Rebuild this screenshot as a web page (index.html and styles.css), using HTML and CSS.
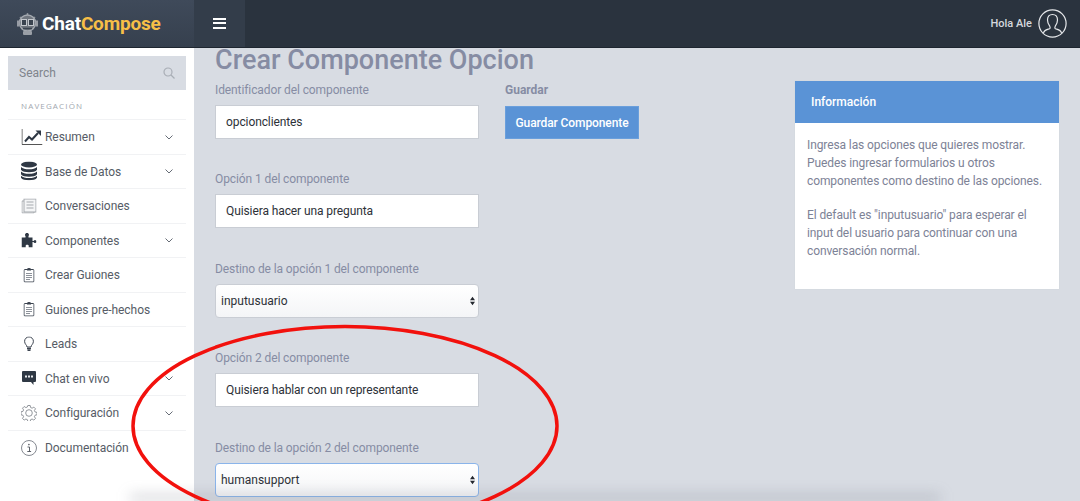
FILE: index.html
```html
<!DOCTYPE html>
<html lang="es">
<head>
  <meta charset="UTF-8" />
  <meta name="viewport" content="width=device-width, initial-scale=1.0" />
  <title>ChatCompose</title>
  <link rel="stylesheet" href="styles.css">
</head>
<body>
<section class="header">
  <div class="brand">
    <svg class="brand-icon" width="21" height="22" viewBox="0 0 21 22">
      <path d="M3 4l2.500 2.500M18 4l-2.500 2.500M10.500 0v3" stroke="#8e949c" stroke-width="1.500" fill="none"/>
      <circle cx="10.500" cy="10" r="8" fill="#6f757e" stroke="#a4a9b0" stroke-width="1.500"/>
      <rect x="0" y="7.500" width="2.500" height="6" fill="#979ca4"/>
      <rect x="18.500" y="7.500" width="2.500" height="6" fill="#979ca4"/>
      <rect x="4.500" y="6.500" width="5" height="6" fill="#3a434f" stroke="#c3c7cc"/>
      <rect x="11.500" y="6.500" width="5" height="6" fill="#3a434f" stroke="#c3c7cc"/>
      <path d="M6 15.500h9" stroke="#3a434f" stroke-width="1.500"/>
      <rect x="6" y="18" width="9" height="4" rx="1" fill="#9a9fa6"/>
    </svg>
    <span class="brand-name">Chat<span class="brand-accent">Compose</span></span>
  </div>
  <div class="topbar">
    <div class="burger"><span></span><span></span><span></span></div>
    <div class="user">
      <span>Hola Ale</span>
      <svg width="29" height="29" viewBox="0 0 29 29" fill="none" stroke="#e6e8eb" stroke-width="1.2">
        <circle cx="14.500" cy="14.500" r="13.600"/>
        <path d="M5.500 24c.5-3 4-3.500 6-4.300.8-.4.8-1.500.2-2.500-1.500-2-2.200-4-2.200-6.200 0-3.500 2-5.500 5-5.500s5 2 5 5.500c0 2.200-.7 4.200-2.200 6.200-.6 1-.6 2.100.2 2.500 2 .8 5.500 1.300 6 4.300"/>
      </svg>
    </div>
  </div>
</section>

<section class="layout">
  <aside class="sidebar">
    <div class="search">
      <span>Search</span>
      <svg width="12" height="12" viewBox="0 0 12 12" fill="none" stroke="#a9aeb6" stroke-width="1.2">
        <circle cx="5" cy="5" r="4"/><path d="M8 8l3.500 3.500"/>
      </svg>
    </div>
    <p class="nav-title">NAVEGACIÓN</p>
    <ul class="nav">
      <li>
        <svg class="nav-icon nav-icon-wide" width="21" height="16" viewBox="0 0 21 16" fill="none" stroke="#2f3844">
          <path d="M.5 0v15.500h20.500" stroke="#555" />
          <path d="M3.500 12.500l4-4.500 3 2.500 6-6.500" stroke-width="2"/>
          <path d="M14 1.500h5.500V7z" fill="#2f3844" stroke="none"/>
        </svg>
        <span>Resumen</span>
        <svg class="chev" width="8" height="5" viewBox="0 0 8 5"><path d="M.5.500L4 4 7.500.500" fill="none" stroke="#666c76"/></svg>
      </li>
      <li>
        <svg class="nav-icon" width="16" height="19" viewBox="0 0 16 19" fill="#2f3844">
          <ellipse cx="8" cy="3" rx="8" ry="3"/>
          <path d="M0 5.500c1.500 1.700 4.500 2.300 8 2.300s6.500-.6 8-2.300v2.700c-1 1.800-4.500 2.500-8 2.500s-7-.7-8-2.500z"/>
          <path d="M0 10c1.500 1.700 4.500 2.300 8 2.300s6.500-.6 8-2.300v2.700c-1 1.800-4.500 2.500-8 2.500s-7-.7-8-2.500z"/>
          <path d="M0 14.300c1.500 1.700 4.500 2.300 8 2.300s6.500-.6 8-2.300v1.900c-1 1.800-4.500 2.500-8 2.500s-7-.7-8-2.500z"/>
        </svg>
        <span>Base de Datos</span>
        <svg class="chev" width="8" height="5" viewBox="0 0 8 5"><path d="M.5.500L4 4 7.500.500" fill="none" stroke="#666c76"/></svg>
      </li>
      <li>
        <svg class="nav-icon" width="15" height="15" viewBox="0 0 15 15" fill="none" stroke="#a5a9ae">
          <path d="M2.500 2.500H.5v12h12v-1.500"/>
          <rect x="2.500" y=".5" width="12" height="13" fill="#f4f5f6"/>
          <path d="M5 3.500h7M5 6.500h7M5 9.500h7"/>
        </svg>
        <span>Conversaciones</span>
      </li>
      <li>
        <svg class="nav-icon" width="15" height="15" viewBox="0 0 15 15" fill="#2f3844">
          <path d="M0 5h4V3.600C3.200 3 3.300 .5 5.500 .5S7.800 3 7 3.600V5h4v3.500h1.500v1H11V15H7.200v-1.500c.4-1.600-3.400-1.600-3 0V15H0z"/>
          <circle cx="13.500" cy="9" r="1.500"/>
        </svg>
        <span>Componentes</span>
        <svg class="chev" width="8" height="5" viewBox="0 0 8 5"><path d="M.5.500L4 4 7.500.500" fill="none" stroke="#666c76"/></svg>
      </li>
      <li>
        <svg class="nav-icon" width="11" height="15" viewBox="0 0 11 15" fill="none" stroke="#3c4450">
          <rect x=".5" y="2" width="10" height="12.500" rx="1"/>
          <path d="M3.500 2.500V1.500h1.200L5.500.5l.8 1h1.200v1z" fill="#3c4450"/>
          <path d="M2.500 6h6M2.500 8h6M2.500 10h6M2.500 12h4" stroke="#8d929a"/>
        </svg>
        <span>Crear Guiones</span>
      </li>
      <li>
        <svg class="nav-icon" width="11" height="15" viewBox="0 0 11 15" fill="none" stroke="#3c4450">
          <rect x=".5" y="2" width="10" height="12.500" rx="1"/>
          <path d="M3.500 2.500V1.500h1.200L5.500.5l.8 1h1.200v1z" fill="#3c4450"/>
          <path d="M2.500 6h6M2.500 8h6M2.500 10h6M2.500 12h4" stroke="#8d929a"/>
        </svg>
        <span>Guiones pre-hechos</span>
      </li>
      <li>
        <svg class="nav-icon" width="10" height="15" viewBox="0 0 10 15" fill="none" stroke="#3c4450">
          <path d="M3 10.500C3 8.500.6 7.800.6 4.800a4.400 4.400 0 0 1 8.800 0c0 3-2.400 3.700-2.400 5.700z"/>
          <path d="M3 12h4M3.500 13.800h3" stroke-width="1.500"/>
        </svg>
        <span>Leads</span>
      </li>
      <li>
        <svg class="nav-icon" width="14" height="14" viewBox="0 0 14 14" fill="#2f3844">
          <path d="M1 0h12a1 1 0 0 1 1 1v9a1 1 0 0 1-1 1h-1.500v3L9 11H1a1 1 0 0 1-1-1V1a1 1 0 0 1 1-1z"/>
          <path d="M3 4.500h2v2H3zM6 4.500h2v2H6zM9 4.500h2v2H9z" fill="#e8eaed"/>
        </svg>
        <span>Chat en vivo</span>
        <svg class="chev" width="8" height="5" viewBox="0 0 8 5"><path d="M.5.500L4 4 7.500.500" fill="none" stroke="#666c76"/></svg>
      </li>
      <li>
        <svg class="nav-icon" width="16" height="16" viewBox="0 0 16 16" fill="none" stroke="#777c84" stroke-width=".8">
          <circle cx="8" cy="8" r="3.300"/>
          <path d="M6.800.5h2.400l.4 2 1.500.7 1.700-1.100 1.700 1.700-1.100 1.700.7 1.500 1.900.4v2.400l-1.900.4-.7 1.500 1.100 1.700-1.700 1.700-1.700-1.100-1.500.7-.4 1.900H6.800l-.4-1.900-1.500-.7-1.700 1.100-1.700-1.700 1.100-1.700-.7-1.500-1.900-.4V6.800l1.900-.4.7-1.500-1.100-1.700 1.700-1.700 1.700 1.100 1.500-.7z"/>
        </svg>
        <span>Configuración</span>
        <svg class="chev" width="8" height="5" viewBox="0 0 8 5"><path d="M.5.500L4 4 7.500.500" fill="none" stroke="#666c76"/></svg>
      </li>
      <li>
        <svg class="nav-icon" width="16" height="16" viewBox="0 0 16 16" fill="none" stroke="#777c84" stroke-width=".9">
          <circle cx="8" cy="8" r="7.500"/>
          <path d="M6.500 7h2v4.500M6.300 11.500h3.800" stroke="#4c5159"/>
          <circle cx="7.900" cy="4.600" r=".8" fill="#4c5159" stroke="none"/>
        </svg>
        <span>Documentación</span>
      </li>
    </ul>
  </aside>

  <main class="content">
    <h1>Crear Componente Opcion</h1>
    <div class="columns">
      <form class="fields">
        <div class="field">
          <label>Identificador del componente</label>
          <input type="text" value="opcionclientes" />
        </div>
        <div class="field">
          <label>Opción 1 del componente</label>
          <input type="text" value="Quisiera hacer una pregunta" />
        </div>
        <div class="field">
          <label>Destino de la opción 1 del componente</label>
          <div class="select-wrap">
            <select><option>inputusuario</option></select>
            <svg class="select-arrows" width="5" height="10" viewBox="0 0 6 10" fill="#23272e"><path d="M3 0l3 4H0zM3 10L0 6h6z"/></svg>
          </div>
        </div>
        <div class="field">
          <label>Opción 2 del componente</label>
          <input type="text" value="Quisiera hablar con un representante" />
        </div>
        <div class="field">
          <label>Destino de la opción 2 del componente</label>
          <div class="select-wrap">
            <select class="focused"><option>humansupport</option></select>
            <svg class="select-arrows" width="5" height="10" viewBox="0 0 6 10" fill="#23272e"><path d="M3 0l3 4H0zM3 10L0 6h6z"/></svg>
          </div>
        </div>
      </form>
      <div class="save">
        <p class="save-label">Guardar</p>
        <button type="button" class="btn">Guardar Componente</button>
      </div>
      <div class="info">
        <h2>Información</h2>
        <div class="info-body">
          <p>Ingresa las opciones que quieres mostrar. Puedes ingresar formularios u otros componentes como destino de las opciones.</p>
          <p>El default es "inputusuario" para esperar el input del usuario para continuar con una conversación normal.</p>
        </div>
      </div>
    </div>
  </main>
</section>

<div class="bottom-shade"></div>
<svg class="circle-mark" width="1080" height="501" viewBox="0 0 1080 501">
  <ellipse cx="345" cy="426" rx="212" ry="99.500" fill="none" stroke="#f2110d" stroke-width="3.500"/>
</svg>
</body>
</html>
```

FILE: styles.css
```css
* {
  box-sizing: border-box;
}
html, body {
  height: 501px;
  overflow: hidden;
}
body {
  margin: 0;
  background-color: #d8dce3;
  font-family: Roboto, sans-serif;
  position: relative;
}
.header {
  display: flex;
  height: 48px;
  border-bottom: 1px solid #1e2630;
}
.brand {
  width: 194px;
  background: linear-gradient(#3f4a5a, #36404e);
  display: flex;
  align-items: center;
  padding-left: 17px;
  gap: 4px;
}
.brand-name {
  font-size: 19px;
  font-weight: 700;
  color: #fff;
  letter-spacing: -0.2px;
}
.brand-accent {
  color: #f7bf47;
}
.topbar {
  flex: 1;
  background: linear-gradient(90deg, #333d4a 0, #333d4a 51px, #2a333e 51px, #2a333e 100%);
  display: flex;
  align-items: center;
  justify-content: space-between;
  padding: 0 13px 0 19px;
}
.burger {
  width: 13px;
  display: flex;
  flex-direction: column;
  gap: 2.5px;
  margin-top: -1px;
}
.burger span {
  height: 2px;
  background-color: #fff;
}
.user {
  display: flex;
  align-items: center;
  gap: 6px;
  color: #d5d8dd;
  font-size: 11px;
  font-weight: 500;
}
.layout {
  display: flex;
  height: 453px;
}
.sidebar {
  width: 194px;
  flex-shrink: 0;
  background-color: #fff;
  padding: 8px 8px 0;
}
.search {
  height: 34px;
  background-color: #d8dce3;
  display: flex;
  align-items: center;
  justify-content: space-between;
  padding: 0 11px;
  font-size: 12px;
  color: #7f848c;
}
.nav-title {
  margin: 11px 0 0;
  padding-left: 13px;
  height: 19px;
  line-height: 9px;
  font-family: "Open Sans", sans-serif;
  font-size: 8px;
  letter-spacing: 1.15px;
  color: #a2a7af;
  border-bottom: 1px solid #f1f2f4;
}
.nav {
  list-style: none;
  margin: 0;
  padding: 0;
}
.nav li {
  position: relative;
  height: 34.5px;
  display: flex;
  align-items: center;
  padding: 1px 0 0 37px;
  font-size: 12px;
  color: #565c66;
  border-bottom: 1px solid #f1f2f4;
  letter-spacing: -0.05px;
}
.nav li:last-child {
  border-bottom: none;
}
.nav-icon {
  position: absolute;
  left: 21px;
  top: 50%;
  transform: translate(-50%, -50%);
}
.nav-icon-wide {
  left: 24px;
}
.chev {
  margin-left: auto;
  margin-right: 13px;
}
.content {
  flex: 1;
  padding: 0 21px;
}
h1 {
  margin: 0;
  height: 24px;
  font-size: 27px;
  line-height: 24px;
  font-weight: 500;
  color: #868ca3;
}
.columns {
  display: flex;
  margin-top: 11px;
}
.fields {
  width: 264px;
}
.field {
  height: 89.4px;
}
.field:last-child {
  height: auto;
}
.field label {
  display: block;
  height: 22px;
  font-size: 12px;
  color: #868ca3;
  letter-spacing: -0.1px;
}
.field input,
.field select {
  display: block;
  width: 100%;
  height: 34px;
  border: 1px solid #c9cdd4;
  background-color: #fff;
  font-family: Roboto, sans-serif;
  font-size: 12px;
  color: #2d3138;
  outline: none;
}
.field input {
  padding: 0 10px;
  letter-spacing: -0.1px;
}
.select-wrap {
  position: relative;
}
.field select {
  appearance: none;
  border-radius: 4px;
  padding: 0 10px 0 5px;
  background: linear-gradient(#fff, #f4f5f7);
}
.field select.focused {
  border-color: #8ab4ea;
}
.select-arrows {
  position: absolute;
  right: 4px;
  top: 12px;
}
.save {
  width: 290px;
  margin-left: 26px;
}
.save-label {
  margin: 0;
  height: 23px;
  font-size: 12px;
  font-weight: 700;
  color: #868ca3;
}
.btn {
  width: 134px;
  height: 33px;
  border: 1px solid #6a9fdc;
  background-color: #5a93d6;
  color: #fff;
  font-family: Roboto, sans-serif;
  font-size: 12px;
  font-weight: 500;
  letter-spacing: -0.1px;
  padding: 0;
}
.info {
  width: 264px;
  height: 208px;
  margin-top: -2px;
  background-color: #fff;
  box-shadow: 0 0 1px #c9cdd4;
}
.info h2 {
  margin: 0;
  height: 42px;
  line-height: 43px;
  padding-left: 16px;
  background-color: #5a93d6;
  color: #fff;
  font-size: 12px;
  font-weight: 500;
}
.info-body {
  padding: 13px 12px;
  font-size: 12px;
  line-height: 18px;
  letter-spacing: -0.1px;
  color: #7d8296;
}
.info-body p {
  margin: 0 0 16px;
}
.bottom-shade {
  position: absolute;
  left: 130px;
  right: 140px;
  bottom: 0;
  height: 6px;
  background-color: rgba(110, 115, 130, 0.38);
  filter: blur(7px);
  pointer-events: none;
}
.circle-mark {
  position: absolute;
  left: 0;
  top: 0;
  pointer-events: none;
}
```
